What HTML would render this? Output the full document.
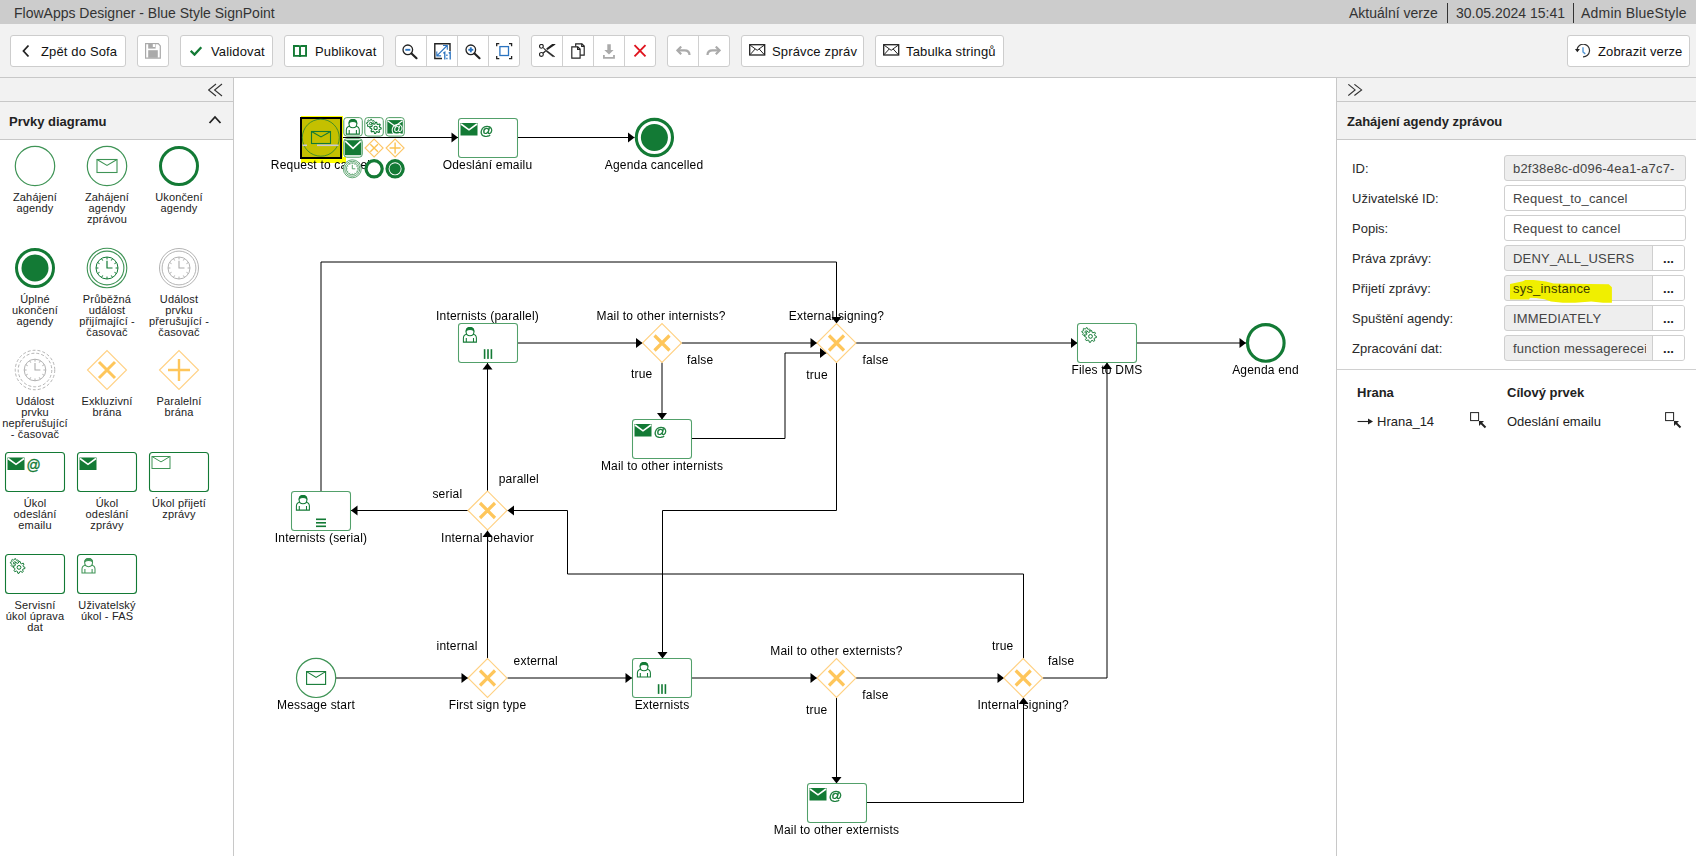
<!DOCTYPE html><html><head><meta charset="utf-8"><title>FlowApps Designer</title><style>
*{margin:0;padding:0;box-sizing:border-box}
html,body{width:1696px;height:856px;overflow:hidden;background:#fff;font-family:"Liberation Sans", sans-serif;color:#111}
.abs{position:absolute}
#title{position:absolute;left:0;top:0;width:1696px;height:24px;background:#cccccc;color:#333;font-size:14px}
#title span{position:absolute;top:5px;white-space:nowrap}
#tb{position:absolute;left:0;top:24px;width:1696px;height:54px;background:#f2f2f2;border-bottom:1px solid #c8c8c8}
.btn{position:absolute;top:11px;height:32px;background:#fff;border:1px solid #cdcdcd;border-radius:3px;font-size:13px;color:#111;white-space:nowrap}
.btn .t{position:absolute;top:8px;letter-spacing:0.15px}
.btn svg{position:absolute}
.grp{position:absolute;top:11px;height:32px;background:#fff;border:1px solid #cdcdcd;border-radius:3px}
.sep{position:absolute;top:0;width:1px;height:30px;background:#d0d0d0}
#lp{position:absolute;left:0;top:78px;width:234px;height:778px;border-right:1px solid #c8c8c8;background:#fff}
.ph1{position:absolute;left:0;top:0;width:100%;height:24px;background:#f2f2f2;border-bottom:1px solid #c8c8c8}
.ph2{position:absolute;left:0;top:24px;width:100%;height:38px;background:#f2f2f2;border-bottom:1px solid #c8c8c8;font-weight:bold;font-size:13px;color:#222}
.ph2 span{position:absolute;top:12px}
.plab{position:absolute;width:72px;text-align:center;font-size:11px;line-height:11px;color:#222;letter-spacing:0.15px}
#rp{position:absolute;left:1336px;top:78px;width:360px;height:778px;border-left:1px solid #c8c8c8;background:#fff}
.fl{position:absolute;left:15px;font-size:13px;color:#2a2a2a}
.inp{position:absolute;left:167px;width:182px;height:26px;border-radius:4px;border:1px solid #cfcfcf;border-radius:3px;background:#fff;font-size:13px;color:#444;overflow:hidden;white-space:nowrap}
.inp.g{background:#eeeeee}
.inp .v{position:absolute;left:8px;top:5px;letter-spacing:0.2px}
.inp .dots{position:absolute;right:0;top:0;width:32px;height:24px;background:#fff;border-left:1px solid #cfcfcf;font-weight:bold;font-size:13px;text-align:center;line-height:26px;color:#222}
</style></head><body><div id="title"><span style="left:14px;top:5px">FlowApps Designer - Blue Style SignPoint</span><span style="left:1349px">Aktuální verze</span><div class="abs" style="left:1447px;top:3px;width:1px;height:20px;background:#333"></div><span style="left:1456px">30.05.2024 15:41</span><div class="abs" style="left:1573px;top:3px;width:1px;height:20px;background:#333"></div><span style="left:1581px;letter-spacing:0.2px">Admin BlueStyle</span></div><div id="tb"><div class="btn" style="left:10px;width:116px"><svg style="left:10px;top:8px" width="10" height="14" viewBox="0 0 10 14"><path d="M7.5 1.5 L2.5 7 L7.5 12.5" fill="none" stroke="#222" stroke-width="1.8"/></svg><span class="t" style="left:30px">Zpět do Sofa</span></div><div class="btn" style="left:137px;width:32px"><svg style="left:7px;top:7px" width="17" height="17" viewBox="0 0 17 17"><path d="M0.6 0.6 H13.3 L15.3 2.9 V15.2 H0.6 Z" fill="#fff" stroke="#aaa" stroke-width="1.2"/><rect x="3.2" y="0.5" width="7.4" height="5.1" fill="#aaa"/><rect x="7.8" y="1.1" width="2.3" height="2.9" fill="#fff"/><rect x="3.2" y="7.2" width="9.6" height="7.6" fill="#aaa"/></svg></div><div class="btn" style="left:180px;width:93px"><svg style="left:9px;top:9px" width="13" height="11" viewBox="0 0 13 11"><path d="M0.7 5.8 L4.5 9.6 L11.3 2.3" fill="none" stroke="#137a35" stroke-width="2.3"/></svg><span class="t" style="left:30px">Validovat</span></div><div class="btn" style="left:284px;width:100px"><svg style="left:8px;top:9px" width="15" height="13" viewBox="0 0 15 13"><path d="M0.95 0.95 H5.6 Q7 0.95 7 1.9 Q7 0.95 8.4 0.95 H13.05 V10.85 H8.4 Q7 10.85 7 11.9 Q7 10.85 5.6 10.85 H0.95 Z M7 1.9 V11.5" fill="none" stroke="#137a35" stroke-width="1.9"/></svg><span class="t" style="left:30px">Publikovat</span></div><div class="grp" style="left:395px;width:125px"><div class="sep" style="left:30px"></div><div class="sep" style="left:61px"></div><div class="sep" style="left:92px"></div><svg class="abs" style="left:6px;top:7.5px" width="17" height="16" viewBox="0 0 17 16"><circle cx="5.8" cy="5.8" r="4.8" fill="#fff" stroke="#222" stroke-width="1.3"/><path d="M9.5 9.5 L14.5 14.2" stroke="#222" stroke-width="2.2" stroke-linecap="round"/><path d="M3.3 5.8 H8.3" stroke="#2a73c0" stroke-width="1.9"/></svg><svg class="abs" style="left:38px;top:7px" width="18" height="17" viewBox="0 0 18 17"><path d="M8 15.5 H0.8 V0.8 H16 V8" fill="none" stroke="#222" stroke-width="1.4"/><path d="M2.8 12.8 L13.2 2.5 M9 2.5 H13.3 V6.8 M2.8 8.6 V12.9 H7.1" fill="none" stroke="#2a73c0" stroke-width="1.1"/><path d="M9.3 10.3 L10.8 9.2 V16.5 M12.9 11.5 V12.9 M12.9 14.8 V16.2 M14.7 10.3 L16.2 9.2 V16.5" fill="none" stroke="#2a73c0" stroke-width="1.3"/></svg><svg class="abs" style="left:69px;top:7.5px" width="17" height="16" viewBox="0 0 17 16"><circle cx="5.8" cy="5.8" r="4.8" fill="#fff" stroke="#222" stroke-width="1.3"/><path d="M9.5 9.5 L14.5 14.2" stroke="#222" stroke-width="2.2" stroke-linecap="round"/><path d="M3.3 5.8 H8.3" stroke="#2a73c0" stroke-width="1.9"/><path d="M5.8 3.3 V8.3" stroke="#2a73c0" stroke-width="1.9"/></svg><svg class="abs" style="left:100px;top:7px" width="18" height="17" viewBox="0 0 18 17"><path d="M0.7 3.3 V0.7 H3.3 M13 0.7 H15.6 V3.3 M15.6 13 V15.6 H13 M3.3 15.6 H0.7 V13" fill="none" stroke="#222" stroke-width="1.3"/><rect x="3.9" y="3.6" width="8.6" height="8.9" fill="none" stroke="#2a73c0" stroke-width="1.3"/></svg></div><div class="grp" style="left:531px;width:125px"><div class="sep" style="left:30px"></div><div class="sep" style="left:61px"></div><div class="sep" style="left:92px"></div><svg class="abs" style="left:7px;top:8px" width="17" height="15" viewBox="0 0 17 15"><circle cx="2.4" cy="2.3" r="1.9" fill="none" stroke="#222" stroke-width="1.15"/><circle cx="2.4" cy="10.4" r="1.9" fill="none" stroke="#222" stroke-width="1.15"/><path d="M3.9 3.4 L7.5 6.2 L15.8 12.6 L13.6 12.6 L7 7.3 Z" fill="#222" stroke="#222" stroke-width="0.5" stroke-linejoin="round"/><path d="M3.9 9.3 L6.6 7 M8.2 5.6 L15.8 0.2 L13.8 0.3 L7.6 5" fill="#222" stroke="#222" stroke-width="1.2" stroke-linejoin="round"/></svg><svg class="abs" style="left:38px;top:7px" width="16" height="17" viewBox="0 0 16 17"><path d="M5.7 3.8 V0.8 H11.9 L14.2 3.1 V12.1 H10.1" fill="#fff" stroke="#222" stroke-width="1.15"/><path d="M11.7 0.8 V3.3 H14.2" fill="none" stroke="#222" stroke-width="1.15"/><path d="M1.8 3.8 H7.8 L10.1 6.1 V15.1 H1.8 Z" fill="#fff" stroke="#222" stroke-width="1.15"/><path d="M7.6 3.8 V6.3 H10.1" fill="none" stroke="#222" stroke-width="1.15"/></svg><svg class="abs" style="left:70px;top:8px" width="13" height="15" viewBox="0 0 13 15"><path d="M5.3 0.2 H8.8 V6 H11.6 L7 10.6 L2.3 6 H5.3 Z" fill="#aaa"/><path d="M1.9 11.1 V13.9 H12 V11.1" fill="none" stroke="#aaa" stroke-width="1.8"/></svg><svg class="abs" style="left:101px;top:8px" width="14" height="15" viewBox="0 0 14 15"><path d="M1.5 1.2 L12.5 12.3 M12.5 1.2 L1.5 12.3" stroke="#e0141e" stroke-width="1.9"/></svg></div><div class="grp" style="left:667px;width:63px"><div class="sep" style="left:30px"></div><svg class="abs" style="left:8px;top:10px" width="15" height="11" viewBox="0 0 15 11"><path d="M5.2 0.6 L1.5 4.4 L5.2 8.2" fill="none" stroke="#aaa" stroke-width="2.2"/><path d="M2 4.4 H8.5 C11.5 4.4 13.5 6 13.5 9" fill="none" stroke="#aaa" stroke-width="2.2"/></svg><svg class="abs" style="left:38px;top:10px" width="15" height="11" viewBox="0 0 15 11"><path d="M9.8 0.6 L13.5 4.4 L9.8 8.2" fill="none" stroke="#aaa" stroke-width="2.2"/><path d="M13 4.4 H6.5 C3.5 4.4 1.5 6 1.5 9" fill="none" stroke="#aaa" stroke-width="2.2"/></svg></div><div class="btn" style="left:741px;width:123px"><svg style="left:7px;top:8px" width="17" height="13" viewBox="0 0 17 13"><rect x="0.7" y="0.7" width="15" height="10.3" fill="none" stroke="#222" stroke-width="1.3"/><path d="M1.2 1.2 L8.2 6.3 L15.2 1.2 M1.2 10.5 L6.2 5 M15.2 10.5 L10.2 5" fill="none" stroke="#222" stroke-width="1"/></svg><span class="t" style="left:30px">Správce zpráv</span></div><div class="btn" style="left:875px;width:129px"><svg style="left:7px;top:8px" width="17" height="13" viewBox="0 0 17 13"><rect x="0.7" y="0.7" width="15" height="10.3" fill="none" stroke="#222" stroke-width="1.3"/><path d="M1.2 1.2 L8.2 6.3 L15.2 1.2 M1.2 10.5 L6.2 5 M15.2 10.5 L10.2 5" fill="none" stroke="#222" stroke-width="1"/></svg><span class="t" style="left:30px">Tabulka stringů</span></div><div class="btn" style="left:1567px;width:123px"><svg style="left:7px;top:8px" width="16" height="15" viewBox="0 0 16 15"><path d="M8 12.8 A6.3 6.3 0 1 0 2 5.6" fill="none" stroke="#333" stroke-width="1.2"/><path d="M0 4.9 L4.9 4.9 L2.3 8.3 Z" fill="#222"/><path d="M8 3.3 V8 L10.3 9.9" fill="none" stroke="#5196d6" stroke-width="1.4"/></svg><span class="t" style="left:30px">Zobrazit verze</span></div></div><div id="lp"><div class="ph1"><svg class="abs" style="left:208px;top:5px" width="16" height="14" viewBox="0 0 16 14"><path d="M8 1 L0.6 7 L8 13 M14 1 L6.6 7 L14 13" fill="none" stroke="#333" stroke-width="1.1"/></svg></div><div class="ph2"><span style="left:9px">Prvky diagramu</span><svg class="abs" style="left:208px;top:13px" width="14" height="9" viewBox="0 0 14 9"><path d="M1.5 8 L7 2 L12.5 8" fill="none" stroke="#222" stroke-width="1.8"/></svg></div></div><div class="abs" style="left:0;top:0"><svg width="233" height="520" style="position:absolute;left:0;top:140px"><circle cx="35" cy="26" r="19.7" fill="none" stroke="#3f9456" stroke-width="1.2"/><circle cx="107" cy="26" r="19.7" fill="none" stroke="#3f9456" stroke-width="1.2"/><rect x="97" y="19.5" width="20" height="13" fill="none" stroke="#3f9456" stroke-width="1.1"/><path d="M97 19.5 L107.0 25.35 L117 19.5" fill="none" stroke="#3f9456" stroke-width="1.1"/><circle cx="179" cy="26" r="18.5" fill="none" stroke="#137a35" stroke-width="3"/><circle cx="35" cy="128" r="18.5" fill="none" stroke="#137a35" stroke-width="3"/><circle cx="35" cy="128" r="13.5" fill="#137a35"/><circle cx="107" cy="128" r="19.8" fill="none" stroke="#3f9456" stroke-width="1.1"/><circle cx="107" cy="128" r="16.9" fill="none" stroke="#3f9456" stroke-width="1.1"/><circle cx="107" cy="128" r="11" fill="none" stroke="#137a35" stroke-width="1.0"/><line x1="115.58" y1="128.00" x2="118.00" y2="128.00" stroke="#137a35" stroke-width="1.0"/><line x1="114.43" y1="132.29" x2="116.53" y2="133.50" stroke="#137a35" stroke-width="1.0"/><line x1="111.29" y1="135.43" x2="112.50" y2="137.53" stroke="#137a35" stroke-width="1.0"/><line x1="107.00" y1="136.58" x2="107.00" y2="139.00" stroke="#137a35" stroke-width="1.0"/><line x1="102.71" y1="135.43" x2="101.50" y2="137.53" stroke="#137a35" stroke-width="1.0"/><line x1="99.57" y1="132.29" x2="97.47" y2="133.50" stroke="#137a35" stroke-width="1.0"/><line x1="98.42" y1="128.00" x2="96.00" y2="128.00" stroke="#137a35" stroke-width="1.0"/><line x1="99.57" y1="123.71" x2="97.47" y2="122.50" stroke="#137a35" stroke-width="1.0"/><line x1="102.71" y1="120.57" x2="101.50" y2="118.47" stroke="#137a35" stroke-width="1.0"/><line x1="107.00" y1="119.42" x2="107.00" y2="117.00" stroke="#137a35" stroke-width="1.0"/><line x1="111.29" y1="120.57" x2="112.50" y2="118.47" stroke="#137a35" stroke-width="1.0"/><line x1="114.43" y1="123.71" x2="116.53" y2="122.50" stroke="#137a35" stroke-width="1.0"/><path d="M107 120.85 L107 128 L112.5 128" fill="none" stroke="#137a35" stroke-width="1.2"/><circle cx="179" cy="128" r="19.5" fill="none" stroke="#aaa" stroke-width="0.9"/><circle cx="179" cy="128" r="16.9" fill="none" stroke="#aaa" stroke-width="0.9"/><circle cx="179" cy="128" r="11" fill="none" stroke="#aaa" stroke-width="0.9"/><line x1="187.58" y1="128.00" x2="190.00" y2="128.00" stroke="#aaa" stroke-width="0.9"/><line x1="186.43" y1="132.29" x2="188.53" y2="133.50" stroke="#aaa" stroke-width="0.9"/><line x1="183.29" y1="135.43" x2="184.50" y2="137.53" stroke="#aaa" stroke-width="0.9"/><line x1="179.00" y1="136.58" x2="179.00" y2="139.00" stroke="#aaa" stroke-width="0.9"/><line x1="174.71" y1="135.43" x2="173.50" y2="137.53" stroke="#aaa" stroke-width="0.9"/><line x1="171.57" y1="132.29" x2="169.47" y2="133.50" stroke="#aaa" stroke-width="0.9"/><line x1="170.42" y1="128.00" x2="168.00" y2="128.00" stroke="#aaa" stroke-width="0.9"/><line x1="171.57" y1="123.71" x2="169.47" y2="122.50" stroke="#aaa" stroke-width="0.9"/><line x1="174.71" y1="120.57" x2="173.50" y2="118.47" stroke="#aaa" stroke-width="0.9"/><line x1="179.00" y1="119.42" x2="179.00" y2="117.00" stroke="#aaa" stroke-width="0.9"/><line x1="183.29" y1="120.57" x2="184.50" y2="118.47" stroke="#aaa" stroke-width="0.9"/><line x1="186.43" y1="123.71" x2="188.53" y2="122.50" stroke="#aaa" stroke-width="0.9"/><path d="M179 120.85 L179 128 L184.5 128" fill="none" stroke="#aaa" stroke-width="1.08"/><circle cx="35" cy="230" r="19.75" fill="none" stroke="#aaa" stroke-width="0.9" stroke-dasharray="3 2"/><circle cx="35" cy="230" r="16.8" fill="none" stroke="#aaa" stroke-width="0.9" stroke-dasharray="3 2"/><circle cx="35" cy="230" r="10.8" fill="none" stroke="#aaa" stroke-width="0.9"/><line x1="43.42" y1="230.00" x2="45.80" y2="230.00" stroke="#aaa" stroke-width="0.9"/><line x1="42.30" y1="234.21" x2="44.35" y2="235.40" stroke="#aaa" stroke-width="0.9"/><line x1="39.21" y1="237.30" x2="40.40" y2="239.35" stroke="#aaa" stroke-width="0.9"/><line x1="35.00" y1="238.42" x2="35.00" y2="240.80" stroke="#aaa" stroke-width="0.9"/><line x1="30.79" y1="237.30" x2="29.60" y2="239.35" stroke="#aaa" stroke-width="0.9"/><line x1="27.70" y1="234.21" x2="25.65" y2="235.40" stroke="#aaa" stroke-width="0.9"/><line x1="26.58" y1="230.00" x2="24.20" y2="230.00" stroke="#aaa" stroke-width="0.9"/><line x1="27.70" y1="225.79" x2="25.65" y2="224.60" stroke="#aaa" stroke-width="0.9"/><line x1="30.79" y1="222.70" x2="29.60" y2="220.65" stroke="#aaa" stroke-width="0.9"/><line x1="35.00" y1="221.58" x2="35.00" y2="219.20" stroke="#aaa" stroke-width="0.9"/><line x1="39.21" y1="222.70" x2="40.40" y2="220.65" stroke="#aaa" stroke-width="0.9"/><line x1="42.30" y1="225.79" x2="44.35" y2="224.60" stroke="#aaa" stroke-width="0.9"/><path d="M35 222.98 L35 230 L40.4 230" fill="none" stroke="#aaa" stroke-width="1.08"/><path d="M87.5 230 L107 210.5 L126.5 230 L107 249.5 Z" fill="none" stroke="#ffd183" stroke-width="1.1"/><path d="M99 222 L115 238 M115 222 L99 238" stroke="#fec65b" stroke-width="3"/><path d="M159.5 230 L179 210.5 L198.5 230 L179 249.5 Z" fill="none" stroke="#ffd183" stroke-width="1.1"/><path d="M168 230 L190 230 M179 219 L179 241" stroke="#fec65b" stroke-width="2.4"/><rect x="5.5" y="312.5" width="59" height="39" rx="3" fill="#fff" stroke="#137a35" stroke-width="1.1"/><rect x="77.5" y="312.5" width="59" height="39" rx="3" fill="#fff" stroke="#137a35" stroke-width="1.1"/><rect x="149.5" y="312.5" width="59" height="39" rx="3" fill="#fff" stroke="#137a35" stroke-width="1.1"/><rect x="7.5" y="317.5" width="17" height="12.5" fill="#137a35"/><path d="M8.0 318.5 L16.0 324.375 L24.0 318.5" fill="none" stroke="#fff" stroke-width="1.6"/><text x="26.5" y="329.5" font-family='"Liberation Sans", sans-serif' font-size="14" fill="#137a35" stroke="#137a35" stroke-width="0.35" letter-spacing="0">@</text><rect x="79.5" y="317.5" width="17" height="12.5" fill="#137a35"/><path d="M80.0 318.5 L88.0 324.375 L96.0 318.5" fill="none" stroke="#fff" stroke-width="1.6"/><rect x="152.0" y="316.5" width="18" height="12" fill="none" stroke="#3f9456" stroke-width="1.0"/><path d="M152.0 316.5 L161.0 321.9 L170.0 316.5" fill="none" stroke="#3f9456" stroke-width="1.0"/><rect x="5.5" y="414.5" width="59" height="39" rx="3" fill="#fff" stroke="#137a35" stroke-width="1.1"/><rect x="77.5" y="414.5" width="59" height="39" rx="3" fill="#fff" stroke="#137a35" stroke-width="1.1"/><polygon points="19.30,423.10 19.21,423.98 17.79,424.34 17.49,424.90 17.98,426.28 17.30,426.84 16.04,426.09 15.43,426.28 14.80,427.60 13.92,427.51 13.56,426.09 13.00,425.79 11.62,426.28 11.06,425.60 11.81,424.34 11.62,423.73 10.30,423.10 10.39,422.22 11.81,421.86 12.11,421.30 11.62,419.92 12.30,419.36 13.56,420.11 14.17,419.92 14.80,418.60 15.68,418.69 16.04,420.11 16.60,420.41 17.98,419.92 18.54,420.60 17.79,421.86 17.98,422.47" fill="none" stroke="#137a35" stroke-width="0.9" stroke-linejoin="round"/><circle cx="14.8" cy="423.1" r="1.35" fill="none" stroke="#137a35" stroke-width="0.9"/><circle cx="19.0" cy="427.4" r="5.6" fill="#fff"/><polygon points="25.00,427.40 24.88,428.57 22.99,429.05 22.59,429.80 23.24,431.64 22.33,432.39 20.65,431.39 19.84,431.64 19.00,433.40 17.83,433.28 17.35,431.39 16.60,430.99 14.76,431.64 14.01,430.73 15.01,429.05 14.76,428.24 13.00,427.40 13.12,426.23 15.01,425.75 15.41,425.00 14.76,423.16 15.67,422.41 17.35,423.41 18.16,423.16 19.00,421.40 20.17,421.52 20.65,423.41 21.40,423.81 23.24,423.16 23.99,424.07 22.99,425.75 23.24,426.56" fill="none" stroke="#137a35" stroke-width="1.0" stroke-linejoin="round"/><circle cx="19.0" cy="427.4" r="1.9" fill="none" stroke="#137a35" stroke-width="1.0"/><g transform="translate(81.5,418.0) scale(1.0)" fill="none" stroke="#3f9456" stroke-width="1.05"><path d="M0.5 15 V11 C0.5 8.6 2 7.4 4.2 6.9 L9.9 6.9 C12.1 7.4 13.5 8.6 13.5 11 V15 Z" fill="#fff"/><path d="M3.2 4.6 C3.2 1.4 4.9 0.5 7.1 0.5 C9.3 0.5 11 1.4 11 4.6 C11 7.2 9.4 8.7 7.1 8.7 C4.8 8.7 3.2 7.2 3.2 4.6 Z" fill="#fff"/><path d="M3.3 3.6 C3.6 1.2 5 0.5 7.1 0.5 C9.2 0.5 10.6 1.2 10.9 3.6 C9.6 2.6 8.5 2.4 7.1 2.4 C5.7 2.4 4.6 2.6 3.3 3.6 Z" fill="#3f9456"/><path d="M3.4 15 V11 M10.6 15 V11"/></g></svg><div class="plab" style="left:-1px;top:191.7px">Zahájení<br>agendy</div><div class="plab" style="left:71px;top:191.7px">Zahájení<br>agendy<br>zprávou</div><div class="plab" style="left:143px;top:191.7px">Ukončení<br>agendy</div><div class="plab" style="left:-1px;top:293.7px">Úplné<br>ukončení<br>agendy</div><div class="plab" style="left:71px;top:293.7px">Průběžná<br>událost<br>přijímající -<br>časovač</div><div class="plab" style="left:143px;top:293.7px">Událost<br>prvku<br>přerušující -<br>časovač</div><div class="plab" style="left:-1px;top:395.5px">Událost<br>prvku<br>nepřerušující<br>- časovač</div><div class="plab" style="left:71px;top:395.5px">Exkluzivní<br>brána</div><div class="plab" style="left:143px;top:395.5px">Paralelní<br>brána</div><div class="plab" style="left:-1px;top:498.2px">Úkol<br>odeslání<br>emailu</div><div class="plab" style="left:71px;top:498.2px">Úkol<br>odeslání<br>zprávy</div><div class="plab" style="left:143px;top:498.2px">Úkol přijetí<br>zprávy</div><div class="plab" style="left:-1px;top:599.7px">Servisní<br>úkol úprava<br>dat</div><div class="plab" style="left:71px;top:599.7px">Uživatelský<br>úkol - FAS</div></div><div id="rp"><div class="ph1"><svg class="abs" style="left:11px;top:6px" width="16" height="14" viewBox="0 0 16 14"><path d="M0.3 0.3 L7.1 5.9 L0.3 11.5 M6.4 0.3 L13.6 5.9 L6.4 11.5" fill="none" stroke="#333" stroke-width="1.1"/></svg></div><div class="ph2"><span style="left:10px">Zahájení agendy zprávou</span></div><div class="fl" style="top:82.5px">ID:</div><div class="inp g" style="top:77px"><span class="v">b2f38e8c-d096-4ea1-a7c7-</span></div><div class="fl" style="top:112.5px">Uživatelské ID:</div><div class="inp" style="top:107px"><span class="v">Request_to_cancel</span></div><div class="fl" style="top:142.5px">Popis:</div><div class="inp" style="top:137px"><span class="v">Request to cancel</span></div><div class="fl" style="top:172.5px">Práva zprávy:</div><div class="inp g" style="top:167px;width:181px"><div class="abs" style="left:0;top:0;width:141px;height:24px;overflow:hidden"><span class="v">DENY_ALL_USERS</span></div><div class="dots">...</div></div><div class="fl" style="top:202.5px">Přijetí zprávy:</div><div class="inp g" style="top:197px;width:181px"><div class="abs" style="left:0;top:0;width:141px;height:24px;overflow:hidden"><span class="v">sys_instance</span></div><div class="dots">...</div></div><div class="fl" style="top:232.5px">Spuštění agendy:</div><div class="inp g" style="top:227px;width:181px"><div class="abs" style="left:0;top:0;width:141px;height:24px;overflow:hidden"><span class="v">IMMEDIATELY</span></div><div class="dots">...</div></div><div class="fl" style="top:262.5px">Zpracování dat:</div><div class="inp g" style="top:257px;width:181px"><div class="abs" style="left:0;top:0;width:141px;height:24px;overflow:hidden"><span class="v">function messagereceived</span></div><div class="dots">...</div></div><div class="abs" style="left:0;top:291px;width:100%;height:1px;background:#d0d0d0"></div><div class="abs" style="left:20px;top:307px;font-weight:bold;font-size:13px;color:#222">Hrana</div><div class="abs" style="left:170px;top:307px;font-weight:bold;font-size:13px;color:#222">Cílový prvek</div><svg class="abs" style="left:20px;top:339px" width="17" height="9" viewBox="0 0 17 9"><path d="M0.5 4.5 H13" stroke="#222" stroke-width="1.1"/><path d="M11 1.6 L16 4.5 L11 7.4 Z" fill="#222"/></svg><div class="abs" style="left:40px;top:336px;font-size:13px;color:#222">Hrana_14</div><div class="abs" style="left:170px;top:336px;font-size:13px;color:#222">Odeslání emailu</div><svg class="abs" style="left:133px;top:334px" width="17" height="17" viewBox="0 0 17 17"><rect x="0.6" y="0.6" width="8" height="8" fill="none" stroke="#222" stroke-width="1"/><path d="M9.5 9.5 L15.5 15.5" stroke="#222" stroke-width="2"/><path d="M9 9 H14 L9 14 Z" fill="#222"/></svg><svg class="abs" style="left:328px;top:334px" width="17" height="17" viewBox="0 0 17 17"><rect x="0.6" y="0.6" width="8" height="8" fill="none" stroke="#222" stroke-width="1"/><path d="M9.5 9.5 L15.5 15.5" stroke="#222" stroke-width="2"/><path d="M9 9 H14 L9 14 Z" fill="#222"/></svg></div><svg class="abs" style="left:1500px;top:270px" width="120" height="40" viewBox="0 0 120 40"><polygon points="10.0,13.9 23.0,11.2 25.3,10.0 33.7,10.0 46.0,11.6 53.6,13.5 88.9,13.9 108.8,14.3 111.9,17.3 111.9,32.7 103.0,32.7 91.2,31.5 75.0,32.7 62.8,32.7 51.0,31.5 44.4,29.2 36.0,28.0 29.9,27.7 29.0,29.6 10.0,29.6" fill="#f0ef00"/></svg><div class="abs" style="left:1513px;top:281px;font-size:13px;color:#3c3b00;letter-spacing:0.2px;white-space:nowrap">sys_instance</div><svg width="1102" height="778" style="position:absolute;left:234px;top:78px;will-change:transform"><g transform="translate(-234,-78)" font-family='"Liberation Sans", sans-serif' font-size="12" fill="#000" letter-spacing="0.2"><polyline points="341,137.5 458,137.5" fill="none" stroke="#000" stroke-width="1" stroke-linejoin="round"/><polygon points="458,137.5 451.5,132.5 451.5,142.5" fill="#000"/><polyline points="517.5,137.5 634.5,137.5" fill="none" stroke="#000" stroke-width="1" stroke-linejoin="round"/><polygon points="634.5,137.5 628.0,132.5 628.0,142.5" fill="#000"/><polyline points="336,678 468,678" fill="none" stroke="#000" stroke-width="1" stroke-linejoin="round"/><polygon points="468,678 461.5,673 461.5,683" fill="#000"/><polyline points="487.5,658.5 487.5,530.5" fill="none" stroke="#000" stroke-width="1" stroke-linejoin="round"/><polygon points="487.5,530.5 482.5,537.0 492.5,537.0" fill="#000"/><polyline points="507.5,678 632,678" fill="none" stroke="#000" stroke-width="1" stroke-linejoin="round"/><polygon points="632,678 625.5,673 625.5,683" fill="#000"/><polyline points="468,510.5 351,510.5" fill="none" stroke="#000" stroke-width="1" stroke-linejoin="round"/><polygon points="351,510.5 357.5,505.5 357.5,515.5" fill="#000"/><polyline points="487.5,491 487.5,363" fill="none" stroke="#000" stroke-width="1" stroke-linejoin="round"/><polygon points="487.5,363 482.5,369.5 492.5,369.5" fill="#000"/><polyline points="321,491.5 321,262 836.5,262 836.5,323.5" fill="none" stroke="#000" stroke-width="1" stroke-linejoin="round"/><polygon points="836.5,323.5 831.5,317.0 841.5,317.0" fill="#000"/><polyline points="517.5,343 642.5,343" fill="none" stroke="#000" stroke-width="1" stroke-linejoin="round"/><polygon points="642.5,343 636.0,338 636.0,348" fill="#000"/><polyline points="681.5,343 817,343" fill="none" stroke="#000" stroke-width="1" stroke-linejoin="round"/><polygon points="817,343 810.5,338 810.5,348" fill="#000"/><polyline points="662,362.5 662,419.5" fill="none" stroke="#000" stroke-width="1" stroke-linejoin="round"/><polygon points="662,419.5 657,413.0 667,413.0" fill="#000"/><polyline points="691.5,438.5 785,438.5 785,353 826.5,353" fill="none" stroke="#000" stroke-width="1" stroke-linejoin="round"/><polygon points="826.5,353 820.0,348 820.0,358" fill="#000"/><polyline points="856,343 1077.5,343" fill="none" stroke="#000" stroke-width="1" stroke-linejoin="round"/><polygon points="1077.5,343 1071.0,338 1071.0,348" fill="#000"/><polyline points="836.5,362.5 836.5,510.5 662.5,510.5 662.5,658.5" fill="none" stroke="#000" stroke-width="1" stroke-linejoin="round"/><polygon points="662.5,658.5 657.5,652.0 667.5,652.0" fill="#000"/><polyline points="1136.5,343 1246,343" fill="none" stroke="#000" stroke-width="1" stroke-linejoin="round"/><polygon points="1246,343 1239.5,338 1239.5,348" fill="#000"/><polyline points="691.5,678 817,678" fill="none" stroke="#000" stroke-width="1" stroke-linejoin="round"/><polygon points="817,678 810.5,673 810.5,683" fill="#000"/><polyline points="856,678 1004,678" fill="none" stroke="#000" stroke-width="1" stroke-linejoin="round"/><polygon points="1004,678 997.5,673 997.5,683" fill="#000"/><polyline points="836.5,697.5 836.5,783.5" fill="none" stroke="#000" stroke-width="1" stroke-linejoin="round"/><polygon points="836.5,783.5 831.5,777.0 841.5,777.0" fill="#000"/><polyline points="866.5,802.5 1023.5,802.5 1023.5,697.5" fill="none" stroke="#000" stroke-width="1" stroke-linejoin="round"/><polygon points="1023.5,697.5 1018.5,704.0 1028.5,704.0" fill="#000"/><polyline points="1023.5,658.5 1023.5,574 567.5,574 567.5,510.5 507.5,510.5" fill="none" stroke="#000" stroke-width="1" stroke-linejoin="round"/><polygon points="507.5,510.5 514.0,505.5 514.0,515.5" fill="#000"/><polyline points="1042.5,678 1107,678 1107,362.5" fill="none" stroke="#000" stroke-width="1" stroke-linejoin="round"/><polygon points="1107,362.5 1102,369.0 1112,369.0" fill="#000"/><rect x="458.5" y="118.5" width="59" height="39" rx="2.8" fill="#fff" stroke="#52a06a" stroke-width="1.05"/><rect x="460.5" y="123.0" width="17" height="12.5" fill="#137a35"/><path d="M461.0 124.0 L469.0 129.875 L477.0 124.0" fill="none" stroke="#fff" stroke-width="1.6"/><text x="479.8" y="134.5" font-family='"Liberation Sans", sans-serif' font-size="13.3" fill="#137a35" stroke="#137a35" stroke-width="0.35" letter-spacing="0">@</text><rect x="458.5" y="323.5" width="59" height="39" rx="2.8" fill="#fff" stroke="#52a06a" stroke-width="1.05"/><g transform="translate(462.9,327.1) scale(1.0)" fill="none" stroke="#137a35" stroke-width="1.05"><path d="M0.5 15 V11 C0.5 8.6 2 7.4 4.2 6.9 L9.9 6.9 C12.1 7.4 13.5 8.6 13.5 11 V15 Z" fill="#fff"/><path d="M3.2 4.6 C3.2 1.4 4.9 0.5 7.1 0.5 C9.3 0.5 11 1.4 11 4.6 C11 7.2 9.4 8.7 7.1 8.7 C4.8 8.7 3.2 7.2 3.2 4.6 Z" fill="#fff"/><path d="M3.3 3.6 C3.6 1.2 5 0.5 7.1 0.5 C9.2 0.5 10.6 1.2 10.9 3.6 C9.6 2.6 8.5 2.4 7.1 2.4 C5.7 2.4 4.6 2.6 3.3 3.6 Z" fill="#137a35"/><path d="M3.4 15 V11 M10.6 15 V11"/></g><rect x="483.8" y="349.2" width="1.6" height="9.7" fill="#137a35"/><rect x="487.2" y="349.2" width="1.6" height="9.7" fill="#137a35"/><rect x="490.59999999999997" y="349.2" width="1.6" height="9.7" fill="#137a35"/><rect x="632.5" y="419.5" width="59" height="39" rx="2.8" fill="#fff" stroke="#52a06a" stroke-width="1.05"/><rect x="634.5" y="424.0" width="17" height="12.5" fill="#137a35"/><path d="M635.0 425.0 L643.0 430.875 L651.0 425.0" fill="none" stroke="#fff" stroke-width="1.6"/><text x="653.8" y="435.5" font-family='"Liberation Sans", sans-serif' font-size="13.3" fill="#137a35" stroke="#137a35" stroke-width="0.35" letter-spacing="0">@</text><rect x="1077.5" y="323.5" width="59" height="39" rx="2.8" fill="#fff" stroke="#52a06a" stroke-width="1.05"/><polygon points="1090.80,332.10 1090.71,332.98 1089.29,333.34 1088.99,333.90 1089.48,335.28 1088.80,335.84 1087.54,335.09 1086.93,335.28 1086.30,336.60 1085.42,336.51 1085.06,335.09 1084.50,334.79 1083.12,335.28 1082.56,334.60 1083.31,333.34 1083.12,332.73 1081.80,332.10 1081.89,331.22 1083.31,330.86 1083.61,330.30 1083.12,328.92 1083.80,328.36 1085.06,329.11 1085.67,328.92 1086.30,327.60 1087.18,327.69 1087.54,329.11 1088.10,329.41 1089.48,328.92 1090.04,329.60 1089.29,330.86 1089.48,331.47" fill="none" stroke="#137a35" stroke-width="0.9" stroke-linejoin="round"/><circle cx="1086.3" cy="332.1" r="1.35" fill="none" stroke="#137a35" stroke-width="0.9"/><circle cx="1090.5" cy="336.4" r="5.6" fill="#fff"/><polygon points="1096.50,336.40 1096.38,337.57 1094.49,338.05 1094.09,338.80 1094.74,340.64 1093.83,341.39 1092.15,340.39 1091.34,340.64 1090.50,342.40 1089.33,342.28 1088.85,340.39 1088.10,339.99 1086.26,340.64 1085.51,339.73 1086.51,338.05 1086.26,337.24 1084.50,336.40 1084.62,335.23 1086.51,334.75 1086.91,334.00 1086.26,332.16 1087.17,331.41 1088.85,332.41 1089.66,332.16 1090.50,330.40 1091.67,330.52 1092.15,332.41 1092.90,332.81 1094.74,332.16 1095.49,333.07 1094.49,334.75 1094.74,335.56" fill="none" stroke="#137a35" stroke-width="1.0" stroke-linejoin="round"/><circle cx="1090.5" cy="336.4" r="1.9" fill="none" stroke="#137a35" stroke-width="1.0"/><rect x="291.5" y="491.5" width="59" height="39" rx="2.8" fill="#fff" stroke="#52a06a" stroke-width="1.05"/><g transform="translate(295.9,495.1) scale(1.0)" fill="none" stroke="#137a35" stroke-width="1.05"><path d="M0.5 15 V11 C0.5 8.6 2 7.4 4.2 6.9 L9.9 6.9 C12.1 7.4 13.5 8.6 13.5 11 V15 Z" fill="#fff"/><path d="M3.2 4.6 C3.2 1.4 4.9 0.5 7.1 0.5 C9.3 0.5 11 1.4 11 4.6 C11 7.2 9.4 8.7 7.1 8.7 C4.8 8.7 3.2 7.2 3.2 4.6 Z" fill="#fff"/><path d="M3.3 3.6 C3.6 1.2 5 0.5 7.1 0.5 C9.2 0.5 10.6 1.2 10.9 3.6 C9.6 2.6 8.5 2.4 7.1 2.4 C5.7 2.4 4.6 2.6 3.3 3.6 Z" fill="#137a35"/><path d="M3.4 15 V11 M10.6 15 V11"/></g><rect x="316.0" y="518.5" width="10" height="1.6" fill="#137a35"/><rect x="316.0" y="522.0" width="10" height="1.6" fill="#137a35"/><rect x="316.0" y="525.5" width="10" height="1.6" fill="#137a35"/><rect x="632.5" y="658.5" width="59" height="39" rx="2.8" fill="#fff" stroke="#52a06a" stroke-width="1.05"/><g transform="translate(636.9,662.1) scale(1.0)" fill="none" stroke="#137a35" stroke-width="1.05"><path d="M0.5 15 V11 C0.5 8.6 2 7.4 4.2 6.9 L9.9 6.9 C12.1 7.4 13.5 8.6 13.5 11 V15 Z" fill="#fff"/><path d="M3.2 4.6 C3.2 1.4 4.9 0.5 7.1 0.5 C9.3 0.5 11 1.4 11 4.6 C11 7.2 9.4 8.7 7.1 8.7 C4.8 8.7 3.2 7.2 3.2 4.6 Z" fill="#fff"/><path d="M3.3 3.6 C3.6 1.2 5 0.5 7.1 0.5 C9.2 0.5 10.6 1.2 10.9 3.6 C9.6 2.6 8.5 2.4 7.1 2.4 C5.7 2.4 4.6 2.6 3.3 3.6 Z" fill="#137a35"/><path d="M3.4 15 V11 M10.6 15 V11"/></g><rect x="657.8000000000001" y="684.1999999999999" width="1.6" height="9.7" fill="#137a35"/><rect x="661.2" y="684.1999999999999" width="1.6" height="9.7" fill="#137a35"/><rect x="664.6" y="684.1999999999999" width="1.6" height="9.7" fill="#137a35"/><rect x="807.5" y="783.5" width="59" height="39" rx="2.8" fill="#fff" stroke="#52a06a" stroke-width="1.05"/><rect x="809.5" y="788.0" width="17" height="12.5" fill="#137a35"/><path d="M810.0 789.0 L818.0 794.875 L826.0 789.0" fill="none" stroke="#fff" stroke-width="1.6"/><text x="828.8" y="799.5" font-family='"Liberation Sans", sans-serif' font-size="13.3" fill="#137a35" stroke="#137a35" stroke-width="0.35" letter-spacing="0">@</text><path d="M642.5 343 L662 323.5 L681.5 343 L662 362.5 Z" fill="#fff" stroke="#ffd183" stroke-width="1.1"/><path d="M654.5 335.5 L669.5 350.5 M669.5 335.5 L654.5 350.5" stroke="#fec65b" stroke-width="3.2"/><path d="M817.0 343 L836.5 323.5 L856.0 343 L836.5 362.5 Z" fill="#fff" stroke="#ffd183" stroke-width="1.1"/><path d="M829.0 335.5 L844.0 350.5 M844.0 335.5 L829.0 350.5" stroke="#fec65b" stroke-width="3.2"/><path d="M468.0 510.5 L487.5 491.0 L507.0 510.5 L487.5 530.0 Z" fill="#fff" stroke="#ffd183" stroke-width="1.1"/><path d="M480.0 503.0 L495.0 518.0 M495.0 503.0 L480.0 518.0" stroke="#fec65b" stroke-width="3.2"/><path d="M468.0 678 L487.5 658.5 L507.0 678 L487.5 697.5 Z" fill="#fff" stroke="#ffd183" stroke-width="1.1"/><path d="M480.0 670.5 L495.0 685.5 M495.0 670.5 L480.0 685.5" stroke="#fec65b" stroke-width="3.2"/><path d="M817.0 678 L836.5 658.5 L856.0 678 L836.5 697.5 Z" fill="#fff" stroke="#ffd183" stroke-width="1.1"/><path d="M829.0 670.5 L844.0 685.5 M844.0 670.5 L829.0 685.5" stroke="#fec65b" stroke-width="3.2"/><path d="M1003.7 678 L1023.2 658.5 L1042.7 678 L1023.2 697.5 Z" fill="#fff" stroke="#ffd183" stroke-width="1.1"/><path d="M1015.7 670.5 L1030.7 685.5 M1030.7 670.5 L1015.7 685.5" stroke="#fec65b" stroke-width="3.2"/><circle cx="654.4" cy="137.5" r="18.1" fill="#fff" stroke="#137a35" stroke-width="3.1"/><circle cx="654.4" cy="137.5" r="13.5" fill="#137a35"/><circle cx="1265.8" cy="342.9" r="18.3" fill="#fff" stroke="#137a35" stroke-width="3.1"/><circle cx="316.1" cy="677.9" r="19.6" fill="#fff" stroke="#3f9456" stroke-width="1.2"/><rect x="306.6" y="671.6" width="19" height="12.8" fill="none" stroke="#137a35" stroke-width="1.1"/><path d="M306.6 671.6 L316.1 677.36 L325.6 671.6" fill="none" stroke="#137a35" stroke-width="1.1"/><rect x="301" y="116" width="42" height="43" fill="#ffff00"/><rect x="301" y="157" width="45" height="6" fill="#ffff00"/><rect x="301" y="118" width="40" height="40" fill="#c4c000" stroke="#000" stroke-width="2"/><circle cx="320.8" cy="137.7" r="18.5" fill="none" stroke="#137a35" stroke-width="0.9" opacity="0.8"/><rect x="311.5" y="131.5" width="19" height="12" fill="none" stroke="#137a35" stroke-width="1.1"/><path d="M311.5 131.5 L321.0 136.9 L330.5 131.5" fill="none" stroke="#137a35" stroke-width="1.1"/><rect x="302.5" y="144.5" width="4.5" height="1.6" fill="#c8c8d8"/><rect x="317" y="144.5" width="21.5" height="1.6" fill="#c8c8d8"/><text x="320.5" y="168.5" text-anchor="middle">Request to cancel</text><text x="487.5" y="168.5" text-anchor="middle">Odeslání emailu</text><text x="654" y="168.5" text-anchor="middle">Agenda cancelled</text><text x="487.5" y="319.6" text-anchor="middle">Internists (parallel)</text><text x="661" y="320" text-anchor="middle">Mail to other internists?</text><text x="836.5" y="320" text-anchor="middle">External signing?</text><text x="1107" y="373.6" text-anchor="middle">Files to DMS</text><text x="1265.5" y="373.6" text-anchor="middle">Agenda end</text><text x="662" y="469.5" text-anchor="middle">Mail to other internists</text><text x="321" y="541.5" text-anchor="middle">Internists (serial)</text><text x="487.5" y="541.5" text-anchor="middle">Internal behavior</text><text x="432.4" y="497.6" text-anchor="start">serial</text><text x="498.7" y="482.6" text-anchor="start">parallel</text><text x="316" y="708.9" text-anchor="middle">Message start</text><text x="487.5" y="708.9" text-anchor="middle">First sign type</text><text x="436.6" y="649.9" text-anchor="start">internal</text><text x="513.6" y="664.8" text-anchor="start">external</text><text x="662" y="708.9" text-anchor="middle">Externists</text><text x="836.5" y="654.8" text-anchor="middle">Mail to other externists?</text><text x="806" y="713.5" text-anchor="start">true</text><text x="862.3" y="698.6" text-anchor="start">false</text><text x="992" y="649.7" text-anchor="start">true</text><text x="1048" y="664.7" text-anchor="start">false</text><text x="1023.2" y="708.6" text-anchor="middle">Internal signing?</text><text x="836.5" y="833.6" text-anchor="middle">Mail to other externists</text><text x="631" y="378.3" text-anchor="start">true</text><text x="687" y="363.6" text-anchor="start">false</text><text x="806.3" y="378.7" text-anchor="start">true</text><text x="862.4" y="363.6" text-anchor="start">false</text><rect x="343.8" y="117.6" width="18.5" height="18.5" rx="3" fill="#fff" stroke="#3f9456" stroke-width="1" opacity="0.9"/><g transform="translate(345.8,119.1) scale(1.0)" fill="none" stroke="#137a35" stroke-width="1.05"><path d="M0.5 15 V11 C0.5 8.6 2 7.4 4.2 6.9 L9.9 6.9 C12.1 7.4 13.5 8.6 13.5 11 V15 Z" fill="#fff"/><path d="M3.2 4.6 C3.2 1.4 4.9 0.5 7.1 0.5 C9.3 0.5 11 1.4 11 4.6 C11 7.2 9.4 8.7 7.1 8.7 C4.8 8.7 3.2 7.2 3.2 4.6 Z" fill="#fff"/><path d="M3.3 3.6 C3.6 1.2 5 0.5 7.1 0.5 C9.2 0.5 10.6 1.2 10.9 3.6 C9.6 2.6 8.5 2.4 7.1 2.4 C5.7 2.4 4.6 2.6 3.3 3.6 Z" fill="#137a35"/><path d="M3.4 15 V11 M10.6 15 V11"/></g><rect x="364.8" y="117.6" width="18.5" height="18.5" rx="3" fill="#fff" stroke="#3f9456" stroke-width="1" opacity="0.9"/><polygon points="375.10,123.60 375.02,124.44 373.66,124.78 373.37,125.32 373.84,126.64 373.19,127.18 371.98,126.46 371.40,126.64 370.80,127.90 369.96,127.82 369.62,126.46 369.08,126.17 367.76,126.64 367.22,125.99 367.94,124.78 367.76,124.20 366.50,123.60 366.58,122.76 367.94,122.42 368.23,121.88 367.76,120.56 368.41,120.02 369.62,120.74 370.20,120.56 370.80,119.30 371.64,119.38 371.98,120.74 372.52,121.03 373.84,120.56 374.38,121.21 373.66,122.42 373.84,123.00" fill="none" stroke="#137a35" stroke-width="1.0" stroke-linejoin="round"/><circle cx="370.8" cy="123.6" r="1.29" fill="none" stroke="#137a35" stroke-width="1.0"/><circle cx="375.6" cy="127.89999999999999" r="5.6" fill="#fff"/><polygon points="381.20,127.90 381.09,128.99 379.33,129.44 378.95,130.14 379.56,131.86 378.71,132.56 377.14,131.63 376.39,131.85 375.60,133.50 374.51,133.39 374.06,131.63 373.36,131.25 371.64,131.86 370.94,131.01 371.87,129.44 371.65,128.69 370.00,127.90 370.11,126.81 371.87,126.36 372.25,125.66 371.64,123.94 372.49,123.24 374.06,124.17 374.81,123.95 375.60,122.30 376.69,122.41 377.14,124.17 377.84,124.55 379.56,123.94 380.26,124.79 379.33,126.36 379.55,127.11" fill="none" stroke="#137a35" stroke-width="1.1" stroke-linejoin="round"/><circle cx="375.6" cy="127.89999999999999" r="1.68" fill="none" stroke="#137a35" stroke-width="1.1"/><rect x="385.8" y="117.6" width="18.5" height="18.5" rx="3" fill="#fff" stroke="#3f9456" stroke-width="1" opacity="0.9"/><rect x="387.3" y="120.1" width="15.5" height="13.5" fill="#137a35"/><path d="M387.6 120.69999999999999 L395.05 126.3 L402.5 120.69999999999999" fill="none" stroke="#fff" stroke-width="1.3"/><text x="391.1" y="133.29999999999998" font-family='"Liberation Sans", sans-serif' font-size="12.5" font-weight="bold" fill="#fff">@</text><rect x="343.8" y="138.7" width="18.5" height="18.5" rx="3" fill="#fff" stroke="#3f9456" stroke-width="1" opacity="0.9"/><rect x="344.8" y="140.2" width="16.5" height="15" fill="#137a35"/><path d="M345.3 141.2 L353.05 148.45 L360.8 141.2" fill="none" stroke="#fff" stroke-width="1.6"/><path d="M365.1 148.0 L374.1 139.0 L383.1 148.0 L374.1 157.0 Z" fill="#fff" stroke="#fdc666" stroke-width="1.1"/><path d="M370.3 144.2 L377.90000000000003 151.8 M377.90000000000003 144.2 L370.3 151.8" stroke="#fcc352" stroke-width="1.4"/><path d="M386.1 148.0 L395.1 139.0 L404.1 148.0 L395.1 157.0 Z" fill="#fff" stroke="#fdc666" stroke-width="1.1"/><path d="M389.6 148.0 L400.6 148.0 M395.1 142.5 L395.1 153.5" stroke="#fcc352" stroke-width="1.4"/><circle cx="352.3" cy="168.8" r="9" fill="#fff" stroke="#3f9456" stroke-width="0.8"/><circle cx="352.3" cy="168.8" r="7.5" fill="none" stroke="#3f9456" stroke-width="0.8"/><circle cx="352.3" cy="168.8" r="6" fill="none" stroke="#3f9456" stroke-width="0.7"/><line x1="356.98" y1="168.80" x2="358.30" y2="168.80" stroke="#3f9456" stroke-width="0.7"/><line x1="356.35" y1="171.14" x2="357.50" y2="171.80" stroke="#3f9456" stroke-width="0.7"/><line x1="354.64" y1="172.85" x2="355.30" y2="174.00" stroke="#3f9456" stroke-width="0.7"/><line x1="352.30" y1="173.48" x2="352.30" y2="174.80" stroke="#3f9456" stroke-width="0.7"/><line x1="349.96" y1="172.85" x2="349.30" y2="174.00" stroke="#3f9456" stroke-width="0.7"/><line x1="348.25" y1="171.14" x2="347.10" y2="171.80" stroke="#3f9456" stroke-width="0.7"/><line x1="347.62" y1="168.80" x2="346.30" y2="168.80" stroke="#3f9456" stroke-width="0.7"/><line x1="348.25" y1="166.46" x2="347.10" y2="165.80" stroke="#3f9456" stroke-width="0.7"/><line x1="349.96" y1="164.75" x2="349.30" y2="163.60" stroke="#3f9456" stroke-width="0.7"/><line x1="352.30" y1="164.12" x2="352.30" y2="162.80" stroke="#3f9456" stroke-width="0.7"/><line x1="354.64" y1="164.75" x2="355.30" y2="163.60" stroke="#3f9456" stroke-width="0.7"/><line x1="356.35" y1="166.46" x2="357.50" y2="165.80" stroke="#3f9456" stroke-width="0.7"/><path d="M352.3 164.9 L352.3 168.8 L355.3 168.8" fill="none" stroke="#3f9456" stroke-width="0.84"/><circle cx="374.1" cy="168.8" r="8.1" fill="#fff" stroke="#137a35" stroke-width="3.2"/><circle cx="395.1" cy="168.8" r="8.1" fill="#fff" stroke="#137a35" stroke-width="3.2"/><circle cx="395.1" cy="168.8" r="5.6" fill="#137a35"/></g></svg></body></html>
